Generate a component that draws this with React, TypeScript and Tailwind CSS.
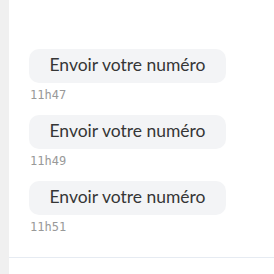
const messages = ["11h47", "11h49", "11h51"];

const App = () => {
	return (
		<div className="flex h-[274px] w-[274px] overflow-hidden bg-white">
			<div className="h-full w-[9px] shrink-0 bg-[#f0f0f0]" />
			<div className="flex flex-1 flex-col">
				<div className="flex h-[257px] flex-col pl-[20px] pt-[49px]">
					{messages.map((time) => (
						<div key={time} className="flex flex-col items-start">
							<div className="flex h-[34px] w-[197px] items-center justify-center rounded-[10px] bg-[#f3f4f6] pb-px font-['Lato',sans-serif] text-[17.5px] text-[#363636]">
								Envoir votre numéro
							</div>
							<div className="mt-[4px] mb-[12px] pl-[1px] font-['DejaVu_Sans_Mono',monospace] text-[12px] leading-[16px] text-[#999]">
								{time}
							</div>
						</div>
					))}
				</div>
				<div className="h-px bg-[#e6ebf2]" />
			</div>
		</div>
	);
};

export default App;
